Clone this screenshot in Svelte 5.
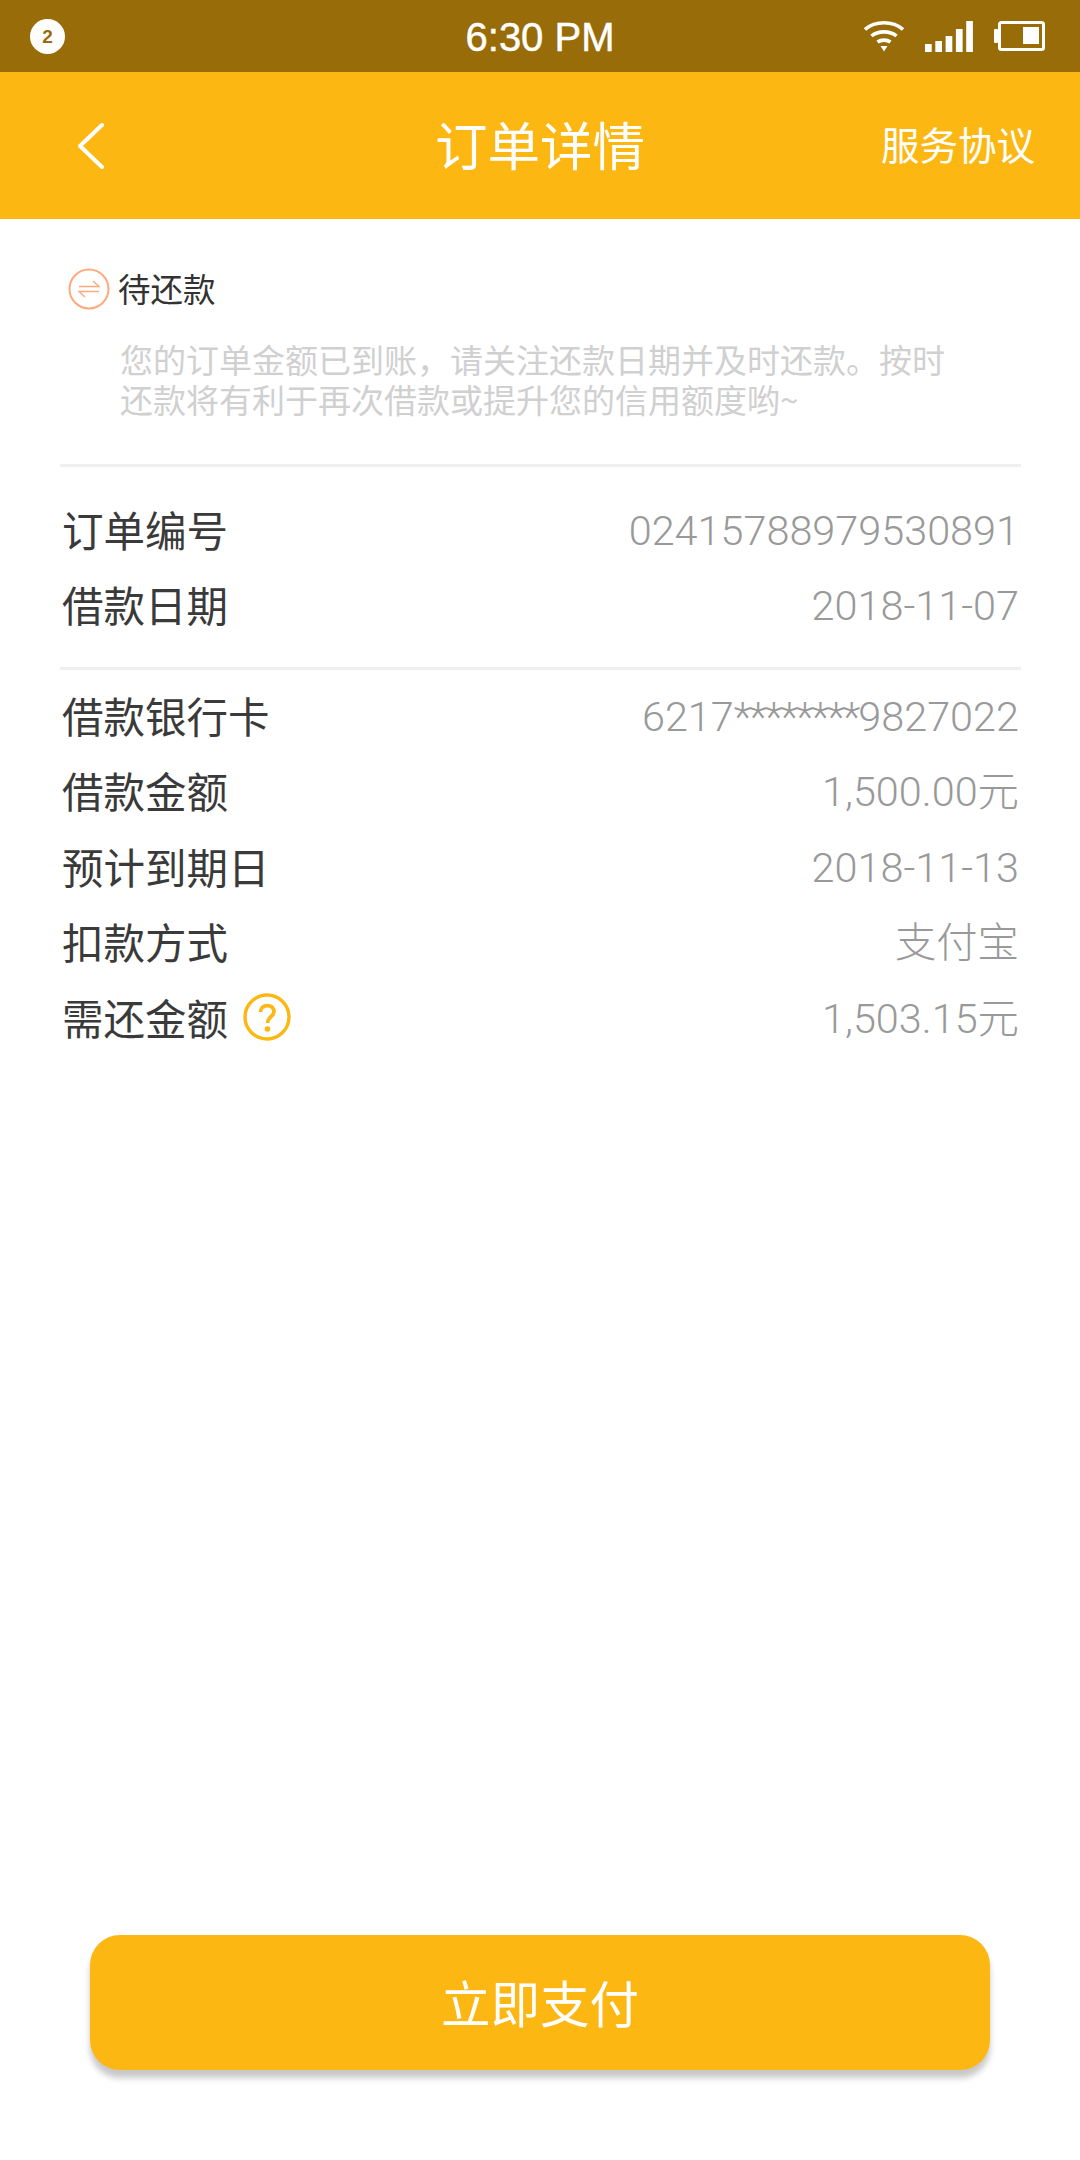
<script>
  const group1 = [
    { label: '订单编号', value: '02415788979530891' },
    { label: '借款日期', value: '2018-11-07' }
  ];
  const group2 = [
    { label: '借款银行卡', prefix: '6217', mask: '********', value: '9827022' },
    { label: '借款金额', value: '1,500.00元' },
    { label: '预计到期日', value: '2018-11-13' },
    { label: '扣款方式', value: '支付宝' },
    { label: '需还金额', value: '1,503.15元', help: true }
  ];
</script>

<div class="page">
  <header class="status">
    <span class="badge">2</span>
    <span class="time">6:30 PM</span>
    <div class="status-icons">
      <svg width="40" height="32" viewBox="0 0 40 32" fill="none" stroke="#fff" stroke-width="3.6">
        <path d="M1 9.5C11 0.5 29 0.5 39 9.5" />
        <path d="M7.5 16C14 10.5 26 10.5 32.5 16" />
        <path d="M13.5 22C17 19.5 23 19.5 26.5 22" />
        <path d="M16.5 26H23.5L20 31.5Z" fill="#fff" stroke="none" />
      </svg>
      <svg width="48" height="31" viewBox="0 0 48 31" fill="#fff">
        <rect x="0" y="23" width="6.7" height="8" />
        <rect x="10.3" y="20" width="6.7" height="11" />
        <rect x="20.6" y="15" width="6.7" height="16" />
        <rect x="30.9" y="8" width="6.7" height="23" />
        <rect x="41.2" y="0" width="6.7" height="31" />
      </svg>
      <svg width="51" height="30" viewBox="0 0 51 30" fill="#fff">
        <rect x="0" y="8" width="4" height="14" rx="1" />
        <rect x="5.5" y="1.5" width="44" height="27" rx="2" fill="none" stroke="#fff" stroke-width="3" />
        <rect x="29" y="6" width="16" height="17" />
      </svg>
    </div>
  </header>

  <nav class="bar">
    <svg class="back" width="26" height="46" viewBox="0 0 26 46" fill="none" stroke="#fff" stroke-width="4" stroke-linecap="round" stroke-linejoin="round">
      <path d="M24 2L2 23L24 44" />
    </svg>
    <h1>订单详情</h1>
    <span class="agreement">服务协议</span>
  </nav>

  <main class="content">
    <section class="notice">
      <div class="state">
        <svg width="42" height="42" viewBox="0 0 42 42" fill="none" stroke="#ffa97c">
          <circle cx="21" cy="21" r="19.5" stroke-width="2" />
          <path d="M11 18.5H31L25 13M31 23.5H11L17 29" stroke-width="1.4" />
        </svg>
        <span class="state-text">待还款</span>
      </div>
      <p>您的订单金额已到账，请关注还款日期并及时还款。按时<br />还款将有利于再次借款或提升您的信用额度哟~</p>
    </section>

    <section class="group first">
      {#each group1 as row}
        <div class="row"><span class="label">{row.label}</span><span class="value">{row.value}</span></div>
      {/each}
    </section>

    <section class="group">
      {#each group2 as row}
        <div class="row">
          <span class="label">
            {row.label}
            {#if row.help}
              <svg class="help" width="48" height="48" viewBox="0 0 48 48" fill="none">
                <circle cx="24" cy="24" r="22" stroke="#fdb713" stroke-width="3.4" />
                <path d="M17.5 19C17.5 10.5 31 10.5 31 18.5C31 23.5 24.5 24 24.5 30" stroke="#fdb713" stroke-width="3.8" />
                <circle cx="24.5" cy="36" r="2.8" fill="#fdb713" />
              </svg>
            {/if}
          </span>
          <span class="value">{#if row.mask}{row.prefix}<span class="mask">{row.mask}</span>{/if}{row.value}</span>
        </div>
      {/each}
    </section>
  </main>

  <div class="action">
    <button type="button">立即支付</button>
  </div>
</div>

<style>
  :global(body) {
    margin: 0;
    background: #fff;
  }
  .page {
    width: 1080px;
    height: 2160px;
    display: flex;
    flex-direction: column;
    background: #fff;
    font-family: "Noto Sans CJK SC", "Liberation Sans", sans-serif;
  }
  .status {
    height: 72px;
    flex: none;
    display: grid;
    grid-template-columns: 1fr auto 1fr;
    align-items: center;
    padding: 0 30px;
    box-sizing: border-box;
    background: #986c08;
    color: #fff;
  }
  .badge {
    width: 35px;
    height: 35px;
    border-radius: 50%;
    background: #fff;
    color: #986c08;
    font: 700 19px/35px "Liberation Sans", sans-serif;
    text-align: center;
  }
  .time {
    font: 400 40px/1 "Liberation Sans", sans-serif;
    -webkit-text-stroke: 0.5px #fff;
    transform: translateY(1px);
  }
  .status-icons {
    display: flex;
    align-items: center;
    justify-content: flex-end;
    gap: 21px;
    padding-right: 5px;
  }
  .bar {
    height: 147px;
    flex: none;
    display: grid;
    grid-template-columns: 1fr auto 1fr;
    align-items: center;
    background: #fdb713;
    color: #fff;
  }
  .back {
    margin-left: 78px;
  }
  h1 {
    margin: 0;
    font-size: 52.5px;
    font-weight: 400;
    line-height: 1;
    transform: translateY(-2px);
  }
  .agreement {
    justify-self: end;
    padding-right: 45px;
    font-size: 38.5px;
    line-height: 1;
    transform: translateY(-2px);
  }
  .content {
    flex: 1;
    padding: 0 59px 0 60px;
  }
  .notice {
    height: 248px;
    box-sizing: border-box;
    padding-top: 49px;
    border-bottom: 3px solid #efefef;
  }
  .state {
    display: flex;
    align-items: center;
    gap: 8px;
    height: 42px;
    color: #333;
    font-size: 32.5px;
    line-height: 1;
  }
  .state svg {
    margin-left: 8px;
  }
  .state-text {
    transform: translateY(-1px);
  }
  .notice p {
    margin: 29px 0 0 60px;
    color: #d0d0d0;
    font-size: 33px;
    line-height: 40px;
    white-space: nowrap;
  }
  .group {
    padding-top: 10px;
  }
  .group.first {
    padding-top: 27px;
    height: 203px;
    box-sizing: border-box;
    border-bottom: 3px solid #efefef;
  }
  .row {
    display: flex;
    justify-content: space-between;
    align-items: center;
    height: 75.4px;
    padding: 0 2px;
  }
  .label {
    display: flex;
    align-items: center;
    gap: 15px;
    color: #3a3a3a;
    font-size: 41.5px;
    line-height: 1;
    transform: translateY(-2px);
  }
  .help {
    flex: none;
  }
  .value {
    color: #999;
    font-family: Roboto, "Noto Sans CJK SC", sans-serif;
    font-weight: 300;
    font-size: 41.4px;
    line-height: 1;
  }
  .mask {
    letter-spacing: -2px;
  }
  .action {
    flex: none;
    padding: 0 90px 90px;
  }
  button {
    display: block;
    width: 100%;
    height: 135px;
    border: 0;
    border-radius: 30px;
    padding: 0 0 3px;
    background: #fdb713;
    color: #fff;
    font-family: inherit;
    font-size: 49.5px;
    box-shadow: 0 8px 6px rgba(0, 0, 0, 0.22);
  }
</style>
